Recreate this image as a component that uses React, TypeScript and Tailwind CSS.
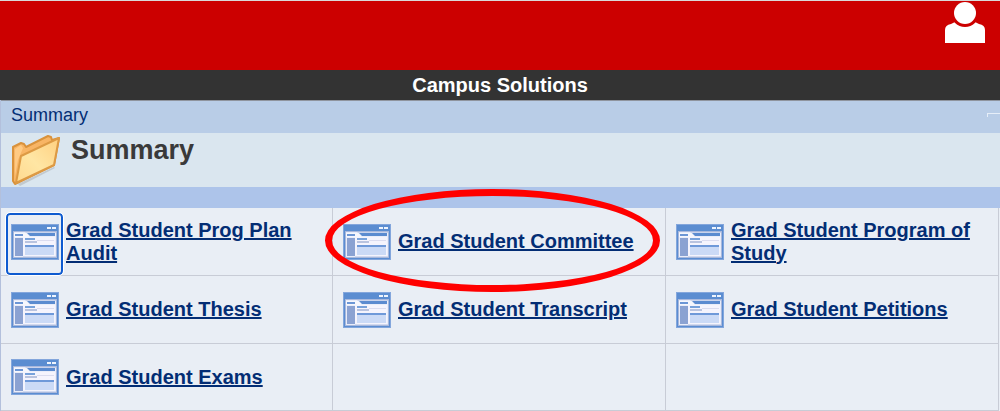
import clsx from "clsx";

interface SummaryLink {
  label: string;
  focused?: boolean;
  circled?: boolean;
}

const links: (SummaryLink | null)[] = [
  { label: "Grad Student Prog Plan Audit", focused: true },
  { label: "Grad Student Committee", circled: true },
  { label: "Grad Student Program of Study" },
  { label: "Grad Student Thesis" },
  { label: "Grad Student Transcript" },
  { label: "Grad Student Petitions" },
  { label: "Grad Student Exams" },
  null,
  null,
];

function WindowIcon() {
  return (
    <svg width="48" height="36" viewBox="0 0 48 36" aria-hidden="true">
      <rect width="48" height="36" fill="#83a6dc" />
      <rect x="1" y="1" width="46" height="34" fill="#5b8dd1" />
      <path d="M36 3h4v2h-4zM41 3h4v2h-4z" fill="#eef4fd" />
      {/* Window body */}
      <rect x="2" y="7" width="44" height="27" fill="#a9b8dc" />
      <rect x="3" y="8" width="42" height="25" fill="#e9edf9" />
      <path d="M14 8h31v1H15z" fill="#c9d3ec" />
      <path d="M16 9h28v3H19z" fill="#5b8bd0" />
      <path d="M3 9h12l4 4H3z" fill="#f6f7fd" />
      <rect x="4" y="10" width="8" height="2" fill="#6c96d5" />
      {/* Sidebar and content */}
      <rect x="4" y="14" width="8" height="18" fill="#8ba2d2" />
      <rect x="12" y="13" width="32" height="20" fill="#f5f4fd" />
      <rect x="14" y="14" width="10" height="2" fill="#78a2db" />
      <rect x="14" y="17" width="12" height="2" fill="#b9c3df" />
      <rect x="26" y="16" width="17" height="1" fill="#dbdcef" />
      <rect x="14" y="21" width="29" height="2" fill="#6f99d9" />
      <rect x="14" y="23" width="29" height="8" fill="#cbdaf6" />
      <rect x="12" y="32" width="33" height="1" fill="#d2daef" />
    </svg>
  );
}

function FolderIcon() {
  return (
    <svg width="50" height="52" viewBox="0 0 50 52" aria-hidden="true">
      <defs>
        <linearGradient id="folderFront" x1="0" y1="1" x2="1" y2="0">
          <stop offset="0" stopColor="#ffd98f" />
          <stop offset="0.45" stopColor="#ffe6a4" />
          <stop offset="1" stopColor="#ffd080" />
        </linearGradient>
      </defs>
      <path d="M7 50L43 33l1 1L9 52z" fill="#a9adb0" opacity="0.5" />
      <path
        d="M2 13L10 9l3 1 2 3L37 2l3 1 1 3 7-2-5 27L4 50l-2-3z"
        fill="#f8b565"
        stroke="#d9923c"
        strokeWidth="2"
        strokeLinejoin="round"
      />
      <path d="M4 15l6-4 2 3-5 12-3 16z" fill="#ffca83" />
      <path
        d="M10 22L48 4l-5 27L5 49z"
        fill="url(#folderFront)"
        stroke="#dd9a44"
        strokeWidth="2"
        strokeLinejoin="round"
      />
    </svg>
  );
}

function PersonIcon() {
  return (
    <svg width="40" height="41" viewBox="0 0 40 41" fill="#fff" aria-hidden="true">
      <path d="M0 41V28q0-5 6-6l4-2h20l4 2q6 1 6 6v13z" />
      <circle cx="20" cy="11" r="14" fill="#cc0000" />
      <circle cx="20" cy="11" r="11" />
    </svg>
  );
}

function LinkCell({ link }: { link: SummaryLink | null }) {
  return (
    <li className="relative flex border-r border-b border-[#c8ccd6] pl-[5px]">
      {link && (
        <>
          <a
            href="#"
            aria-label={`Open ${link.label}`}
            className={clsx(
              "h-[62px] w-[57px] shrink-0 self-end rounded-[4px] border-2 px-[3px] pt-[9px]",
              link.focused ? "border-[#0f5bd0] outline outline-white" : "border-transparent"
            )}
          >
            <WindowIcon />
          </a>
          <a
            href="#"
            className="ml-[3px] self-center text-[20px] leading-[23px] font-bold text-[#032d74] underline decoration-2"
          >
            {link.label}
          </a>
          {link.circled && (
            <div className="pointer-events-none absolute -top-[19px] right-[5px] -left-[8px] z-10 h-[103px] rounded-[50%] border-[7px] border-[#ff0000]" />
          )}
        </>
      )}
    </li>
  );
}

export default function App() {
  return (
    <div className="bg-[#e9eef5] font-['Liberation_Sans',Arial,sans-serif]">
      <header>
        <div className="flex h-[70px] items-start justify-end border-t border-[#d9d9d9] bg-[#cc0000] pt-px pr-[15px]">
          <button type="button" aria-label="Account">
            <PersonIcon />
          </button>
        </div>
        <div className="h-[30px] bg-[#333333] text-center text-[20px] leading-[30px] font-bold text-white">
          Campus Solutions
        </div>
      </header>

      <main className="border-l border-[#b3c0dc]">
        <nav className="flex h-[33px] items-center justify-between border-t border-[#8f949e] bg-[#b9cde7] pl-[10px]">
          <a href="#" className="pb-[5px] text-[18px] leading-[24px] text-[#032d74]">
            Summary
          </a>
          <span className="mb-[4px] h-[4px] w-[13px] border-t border-l border-[#e6eef8]" />
        </nav>
        <div className="flex h-[54px] items-start bg-[#dae6ef] pt-px pl-[10px]">
          <FolderIcon />
          <h1 className="ml-[10px] text-[27px] leading-[32px] font-bold text-[#3a3a3a]">Summary</h1>
        </div>
        <div className="h-[21px] bg-[#adc4ea]" />

        <ul className="mr-px grid grid-cols-[332fr_333fr_333fr] grid-rows-[68px_68px_67px]">
          {links.map((link, i) => (
            <LinkCell key={i} link={link} />
          ))}
        </ul>
      </main>
    </div>
  );
}
